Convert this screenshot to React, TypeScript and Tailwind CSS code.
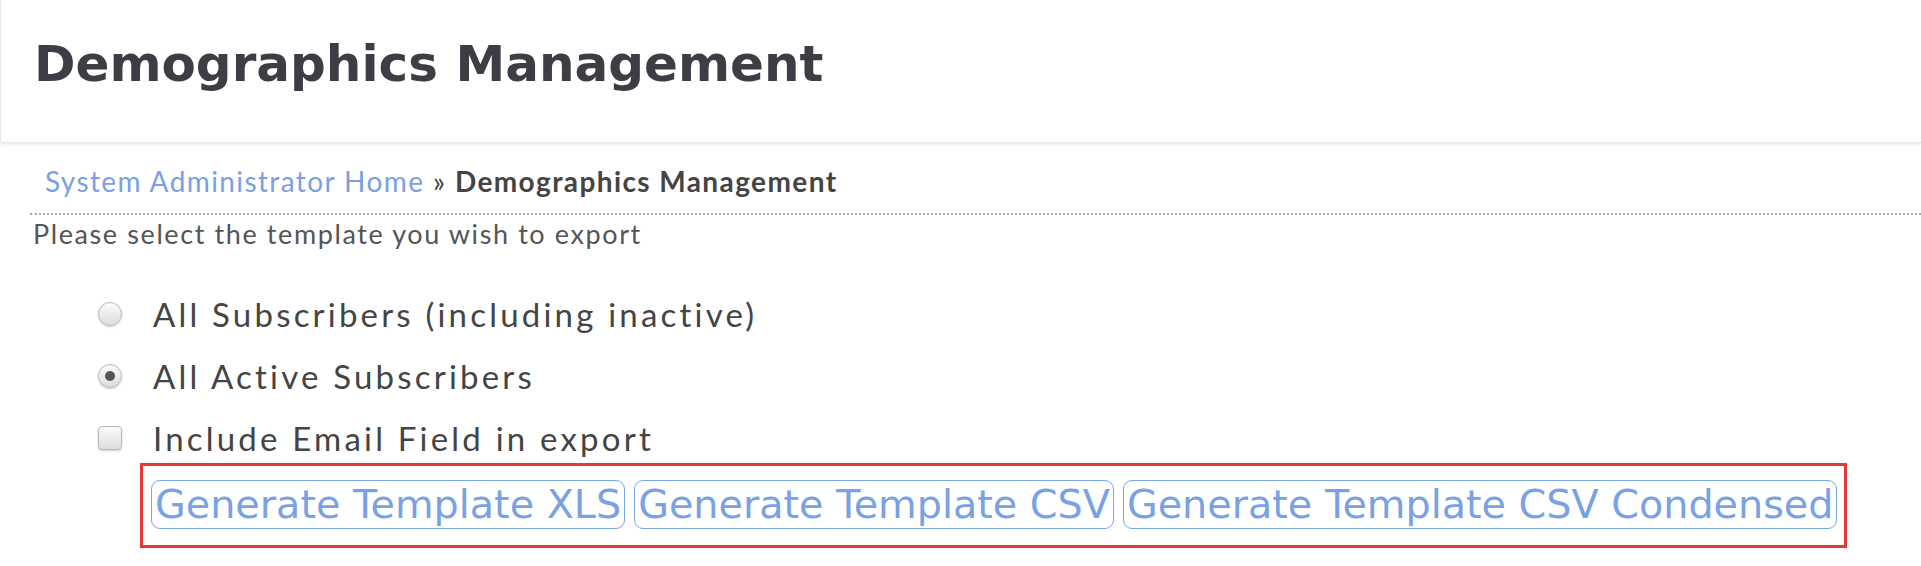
const templates = [
  "Generate Template XLS",
  "Generate Template CSV",
  "Generate Template CSV Condensed",
];

const Radio = ({ checked }: { checked?: boolean }) => (
  <span className="flex h-[24px] w-[24px] shrink-0 items-center justify-center rounded-full border border-[#b9b9b9] bg-gradient-to-b from-[#fbfbfb] to-[#dcdcdc] shadow-[0_1px_2px_rgba(0,0,0,0.2)]">
    {checked && <span className="h-[10px] w-[10px] rounded-full bg-[#555]" />}
  </span>
);

export default function App() {
  return (
    <div className="min-h-[566px] w-full bg-white font-['Lato',sans-serif]">
      {/* Page header */}
      <header className="h-[143px] border-b border-l border-b-[#e8e8e8] border-l-[#e6e6e6] pl-[33px] pt-[39px] shadow-[0_2px_3px_rgba(0,0,0,0.07)]">
        <h1 className="font-['DejaVu_Sans',sans-serif] text-[50px] font-bold leading-none text-[#3d3d45]">
          Demographics Management
        </h1>
      </header>

      <div className="pl-[30px]">
        {/* Breadcrumb */}
        <div className="pl-[15px] pt-[21px] pb-[15px] text-[28px] leading-[34px] tracking-[1.4px]">
          <a href="#" className="text-[#7a9fe2]">
            System Administrator Home
          </a>
          <span className="text-[#444]"> » </span>
          <span className="font-bold text-[#444]">Demographics Management</span>
        </div>
        <div className="border-t-2 border-dotted border-[#a8a8a8]" />

        <p className="pl-[3px] pt-[3px] text-[27px] leading-[32px] tracking-[1.6px] text-[#555]">
          Please select the template you wish to export
        </p>

        {/* Export options */}
        <div className="mt-[44px] flex flex-col gap-[22px] pl-[68px] text-[33px] leading-[40px] tracking-[3.2px] text-[#444]">
          <label className="flex items-center gap-[31px]">
            <Radio />
            All Subscribers (including inactive)
          </label>
          <label className="flex items-center gap-[31px]">
            <Radio checked />
            All Active Subscribers
          </label>
          <label className="flex items-center gap-[31px]">
            <span className="h-[24px] w-[24px] shrink-0 rounded-[4px] border border-[#b9b9b9] bg-gradient-to-b from-[#fbfbfb] to-[#dcdcdc] shadow-[0_1px_2px_rgba(0,0,0,0.2)]" />
            Include Email Field in export
          </label>
        </div>

        <div className="ml-[110px] mt-[5px] inline-flex gap-[9px] border-[3px] border-[#e53935] pt-[14px] pb-[16px] pl-[8px] pr-[7px]">
          {templates.map((t) => (
            <button
              key={t}
              className="h-[49px] rounded-[9px] border-[1.5px] border-[#78a5e6] px-[3px] font-['DejaVu_Sans',sans-serif] text-[39.7px] leading-none text-[#79a2e4]"
            >
              {t}
            </button>
          ))}
        </div>
      </div>
    </div>
  );
}
